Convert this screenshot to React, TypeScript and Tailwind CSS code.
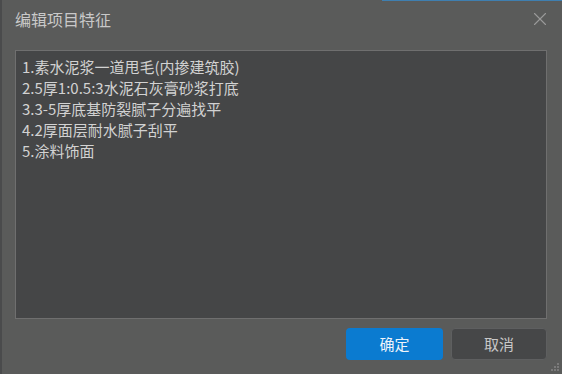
import { X } from "lucide-react"

const lines = [
  "1.素水泥浆一道甩毛(内掺建筑胶)",
  "2.5厚1:0.5:3水泥石灰膏砂浆打底",
  "3.3-5厚底基防裂腻子分遍找平",
  "4.2厚面层耐水腻子刮平",
  "5.涂料饰面",
]

export default function App() {
  return (
    <div
      className="relative flex h-[374px] w-[562px] flex-col overflow-hidden border-l-2 border-[#4a4b4c] bg-[#5a5b5a]"
      style={{ fontFamily: '"Microsoft YaHei", "Noto Sans CJK SC", sans-serif' }}
    >
      <div className="absolute right-0 top-0 h-px w-[180px] bg-[#3f7fb0]" />
      <div className="flex h-[50px] items-start justify-between pl-[13px] pr-[11px] pt-[8px]">
        <span className="text-[16px] leading-[22px] text-[#c9c9c9]">编辑项目特征</span>
        <X className="mt-[0px] h-[22px] w-[22px] text-[#9a9a9a]" strokeWidth={1.2} />
      </div>
      <div className="ml-[13px] h-[269px] w-[532px] border border-[#6f6f6f] bg-[#454647] px-[6px] pt-[5px]">
        {lines.map((l) => (
          <div key={l} className="text-[15px] leading-[21px] text-[#d2d2d2]">
            {l}
          </div>
        ))}
      </div>
      <div className="mt-[9px] flex justify-end gap-[8px] pr-[15px]">
        <button className="h-[32px] w-[97px] rounded-[4px] bg-[#0b7bd0] text-[15px] text-[#eef4fa]">
          确定
        </button>
        <button className="h-[32px] w-[96px] rounded-[4px] border border-[#5e5f60] bg-[#464748] text-[15px] text-[#c8c8c8]">
          取消
        </button>
      </div>
      <svg className="absolute bottom-[2px] right-[2px]" width="10" height="10" viewBox="0 0 10 10">
        <rect x="7" y="1" width="2" height="2" fill="#7a7a7a" />
        <rect x="4" y="4" width="2" height="2" fill="#7a7a7a" />
        <rect x="7" y="4" width="2" height="2" fill="#7a7a7a" />
        <rect x="1" y="7" width="2" height="2" fill="#7a7a7a" />
        <rect x="4" y="7" width="2" height="2" fill="#7a7a7a" />
        <rect x="7" y="7" width="2" height="2" fill="#7a7a7a" />
      </svg>
    </div>
  )
}
